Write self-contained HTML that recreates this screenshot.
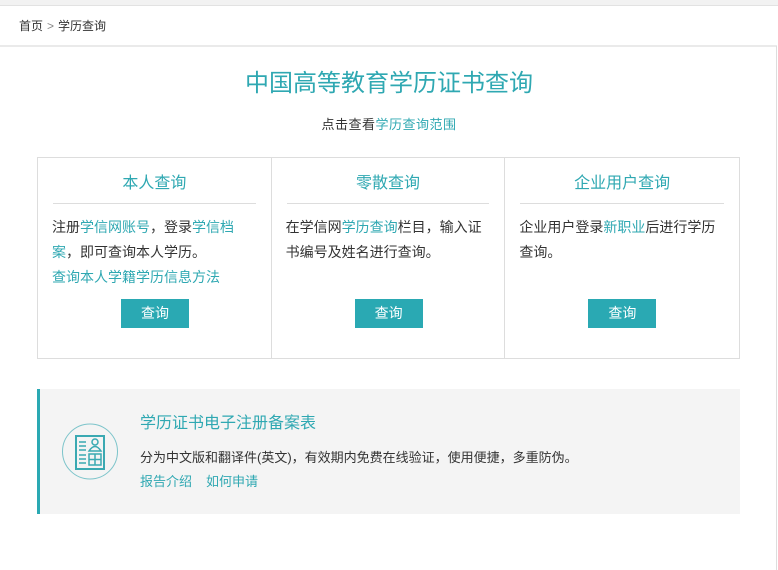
<!DOCTYPE html>
<html><head><meta charset="utf-8"><style>
*{margin:0;padding:0;box-sizing:border-box}
body{width:778px;height:570px;background:#fff;font-family:"Liberation Sans","Noto Sans CJK SC",sans-serif;color:#333;position:relative;overflow:hidden}
.t{color:#2fa8b2}
.abs{position:absolute}
.top{left:0;top:0;width:778px;height:6px;background:#f2f2f2;border-bottom:1px solid #e2e2e2}
.bc{left:19px;top:17px;font-size:12px;color:#333;line-height:18px}
.bc span{color:#888;margin:0 4px}
.line{left:0;top:45px;width:777px;height:2px;background:#eaeaea}
.rb{left:776px;top:46px;width:1px;height:524px;background:#ddd}
h1{position:absolute;left:0;width:778px;top:68px;text-align:center;font-size:24px;font-weight:normal;color:#2fa8b2;line-height:32px}
.sub{left:0;width:778px;top:116px;text-align:center;font-size:13px;line-height:18px;letter-spacing:0.5px}
.box{left:37px;top:157px;width:703px;height:202px;border:1px solid #ddd;display:flex}
.col{width:234px;height:200px;border-right:1px solid #ddd;position:relative}
.col:last-child{border-right:none}
.col h3{position:absolute;left:15px;right:15px;top:14px;height:32px;border-bottom:1px solid #ddd;text-align:center;font-size:16px;font-weight:normal;color:#2fa8b2;line-height:24px}
.col p{position:absolute;left:14px;right:18px;top:57px;font-size:14px;line-height:25px}
.btn{position:absolute;left:83px;top:141px;width:68px;height:29px;background:#2aa9b3;color:#fff;font-size:14px;text-align:center;line-height:29px}
.panel{left:37px;top:389px;width:703px;height:125px;background:#f4f4f4;border-left:3px solid #2aa9b3}
</style></head><body>
<div class="abs top"></div>
<div class="abs bc">首页<span>&gt;</span>学历查询</div>
<div class="abs line"></div>
<div class="abs rb"></div>
<h1>中国高等教育学历证书查询</h1>
<div class="abs sub">点击查看<span class="t">学历查询范围</span></div>
<div class="abs box">
 <div class="col"><h3>本人查询</h3><p>注册<span class="t">学信网账号</span>，登录<span class="t">学信档案</span>，即可查询本人学历。<br><span class="t">查询本人学籍学历信息方法</span></p><div class="btn">查询</div></div>
 <div class="col"><h3>零散查询</h3><p>在学信网<span class="t">学历查询</span>栏目，输入证书编号及姓名进行查询。</p><div class="btn">查询</div></div>
 <div class="col"><h3>企业用户查询</h3><p>企业用户登录<span class="t">新职业</span>后进行学历查询。</p><div class="btn">查询</div></div>
</div>
<div class="abs panel">
 <svg class="abs" style="left:22px;top:34px" width="58" height="58" viewBox="0 0 58 58">
  <circle cx="28" cy="28.5" r="27.5" fill="none" stroke="#7cc4ca" stroke-width="1"/>
  <rect x="14" y="13" width="28" height="33" fill="none" stroke="#3aa9b2" stroke-width="2"/>
  <g stroke="#3aa9b2" stroke-width="1.5" fill="none">
   <line x1="17" y1="19" x2="24" y2="19"/><line x1="17" y1="23" x2="24" y2="23"/><line x1="17" y1="27" x2="24" y2="27"/>
   <line x1="17" y1="32" x2="24" y2="32"/><line x1="17" y1="36" x2="24" y2="36"/><line x1="17" y1="40" x2="24" y2="40"/>
   <circle cx="33" cy="19" r="3"/><path d="M27 28 q6 -9 12 0 z"/>
   <rect x="27" y="31" width="12" height="11"/><line x1="33" y1="31" x2="33" y2="42"/><line x1="27" y1="36.5" x2="39" y2="36.5"/>
  </g>
 </svg>
 <div class="abs t" style="left:100px;top:24px;font-size:16px;line-height:22px">学历证书电子注册备案表</div>
 <div class="abs" style="left:100px;top:60px;font-size:13px;line-height:18px">分为中文版和翻译件(英文)，有效期内免费在线验证，使用便捷，多重防伪。</div>
 <div class="abs t" style="left:100px;top:84px;font-size:13px;line-height:18px">报告介绍<span style="margin-left:14px">如何申请</span></div>
</div>
</body></html>
